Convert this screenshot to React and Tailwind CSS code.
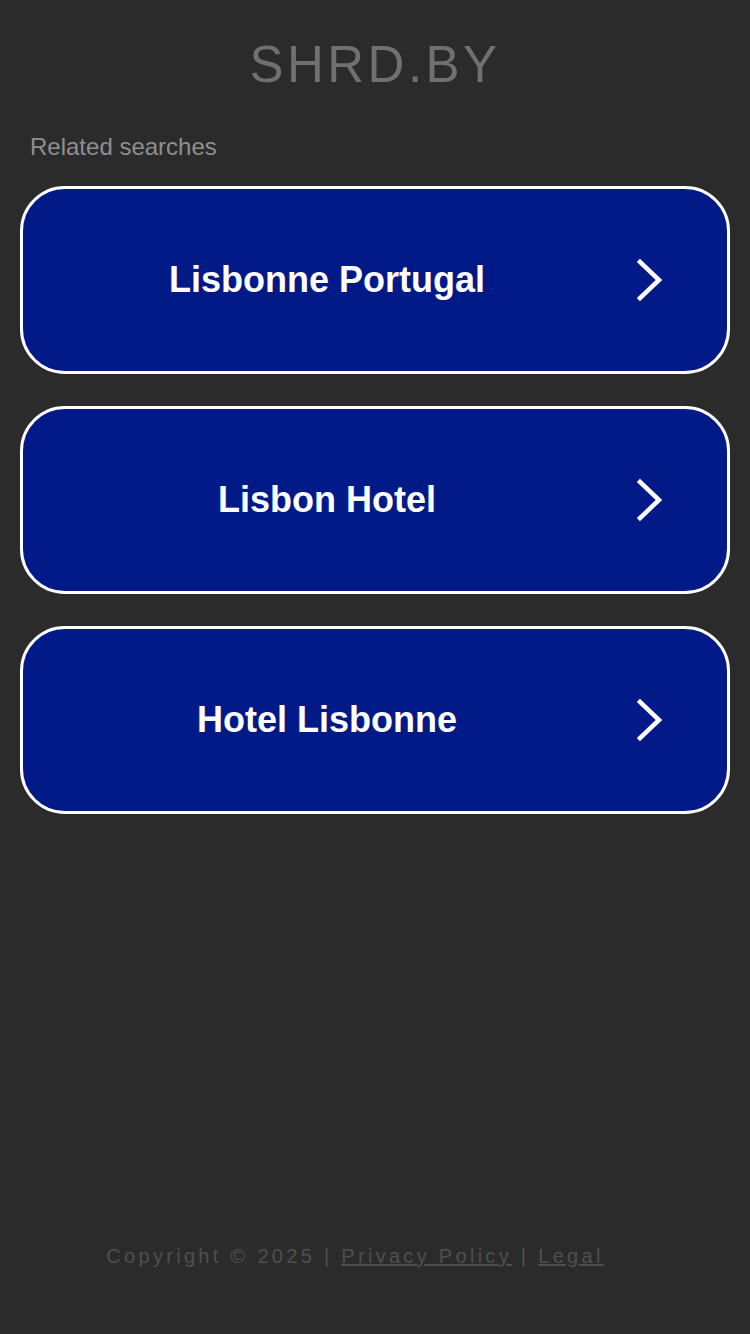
const SEARCHES = ['Lisbonne Portugal', 'Lisbon Hotel', 'Hotel Lisbonne']

function Chevron() {
  return (
    <svg width="40" height="48" viewBox="0 0 40 48" className="shrink-0">
      <polyline points="9,6 28,24 9,42" fill="none" stroke="white" strokeWidth="4.5" strokeLinecap="square" />
    </svg>
  )
}

export default function App() {
  return (
    <div className="h-[1334px] flex flex-col bg-[#2b2b2b] font-['Liberation_Sans',Arial,sans-serif]">
      <div className="h-[128px] flex items-center justify-center">
        <h1 className="text-[51px] leading-none tracking-[3.5px] text-[#707070]">SHRD.BY</h1>
      </div>
      <p className="h-[38px] leading-[38px] px-[30px] text-[24px] text-[#8f8f8f]">Related searches</p>
      <div className="flex flex-col gap-[32px] px-[20px] mt-[20px]">
        {SEARCHES.map((s) => (
          <a
            key={s}
            href="#"
            className="h-[188px] flex items-center border-[3px] border-white rounded-[45px] bg-[#011a88] pr-[56px]"
          >
            <span className="flex-1 text-center text-[36px] font-bold text-white">{s}</span>
            <Chevron />
          </a>
        ))}
      </div>
      <div className="flex-1" />
      <p className="pb-[63px] pr-[40px] text-center text-[20px] leading-[30px] tracking-[3.3px] text-[#4f4f4f]">
        Copyright © 2025 | <a href="#" className="underline">Privacy Policy</a> | <a href="#" className="underline">Legal</a>
      </p>
    </div>
  )
}
